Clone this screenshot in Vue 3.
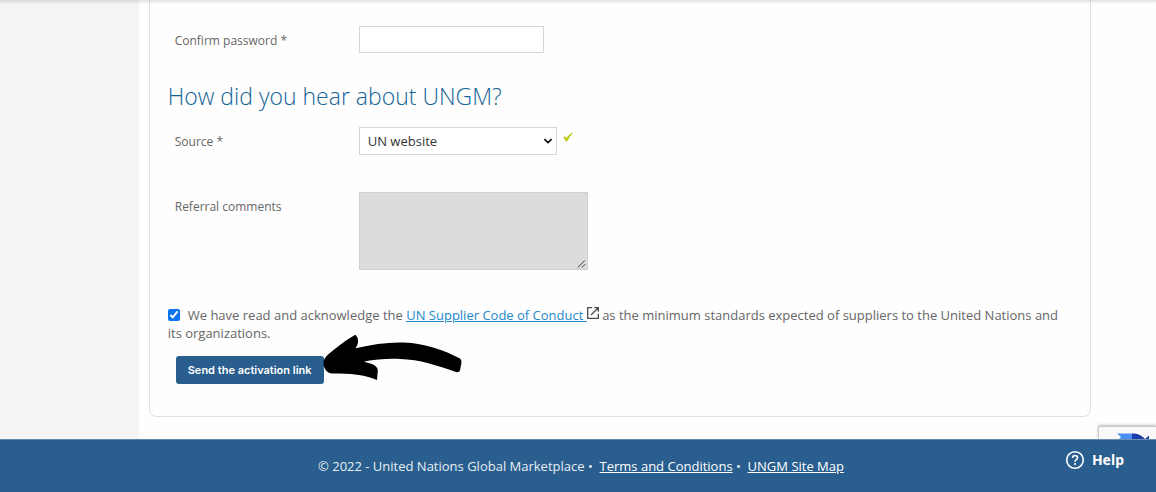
<script setup>
import { ref } from 'vue'

const password = ref('')
const source = ref('UN website')
const comments = ref('')
const accepted = ref(true)
</script>

<template>
  <div class="page">
    <div class="top-shadow"></div>
    <div class="body">
      <aside class="side"></aside>
      <main class="main">
        <form class="card" @submit.prevent>
          <div class="row">
            <label class="label" for="confirm">Confirm password *</label>
            <input id="confirm" v-model="password" class="field text" type="password" />
          </div>
          <h2 class="title">How did you hear about UNGM?</h2>
          <div class="row">
            <label class="label" for="source">Source *</label>
            <div class="select-wrap">
              <select id="source" v-model="source" class="field select">
                <option>UN website</option>
              </select>
              <svg class="chevron" viewBox="0 0 10 6" aria-hidden="true">
                <path d="M1.4 1.1 5 4.6 8.6 1.1" fill="none" stroke="#111" stroke-width="1.7" />
              </svg>
            </div>
            <svg class="tick" viewBox="0 0 10 10" aria-hidden="true">
              <path d="M.4 5.4 2 4.3 3.6 5.8C5.2 3.700 7 2 9.700.3L9.900.9C7.600 3.300 5.900 5.800 4.300 9.200H2.600C2 7.700 1.300 6.500.4 5.400Z" fill="#c0cb18" />
            </svg>
          </div>
          <div class="row comments-row">
            <label class="label" for="comments">Referral comments</label>
            <div class="area-wrap">
              <textarea id="comments" v-model="comments" class="field area"></textarea>
              <svg class="grip" viewBox="0 0 9 8" aria-hidden="true">
                <path d="M.7 7.5 7.8.5M4.9 7.5 8.4 4" fill="none" stroke="#444" stroke-width="1" />
              </svg>
            </div>
          </div>
          <div class="consent">
            <input id="accept" v-model="accepted" class="check" type="checkbox" />
            <label for="accept">We have read and acknowledge the</label>&#32;<a class="link" href="#">UN Supplier Code of Conduct&nbsp;</a>
            <svg class="external" viewBox="0 0 12 12" aria-hidden="true">
              <path d="M5.2.7H.7V11.3H11.3V6.8M7.3.7H11.3V4.7M11.2.8 4 8" fill="none" stroke="#4c4c4c" stroke-width="1.3" />
            </svg>
            as the minimum standards expected of suppliers to the United Nations and its organizations.
          </div>
          <div class="action">
            <button class="send" type="submit">Send the activation link</button>
            <svg class="arrow" viewBox="0 0 140 48" aria-hidden="true">
              <path d="M32.5 1.2Q34 .4 34.5 2C37 6 36.5 10 33.5 14.2C50 10.5 66 8 82 8.5C103 9.4 122 16 138 24.5Q140 26 139.4 29L138 36.5Q137 39 134 38C115 31.500 98 25.500 78 25C65 24.500 54 25.500 42 27.500C47 29.500 52 30 54 32.500Q56 34 55.800 37L55 46C43 40.500 28 39.500 10 39.500C5 39.500 1.500 34 1.500 29C1.500 26 3 23.500 5.500 21C14 14 22 7 32.500 1.200Z" fill="#000" />
            </svg>
          </div>
        </form>
      </main>
    </div>
    <footer class="footer">
      <nav class="legal">
        © 2022 - United Nations Global Marketplace •&nbsp; <a href="#">Terms and Conditions</a> •&nbsp; <a href="#">UNGM Site Map</a>
      </nav>
      <div class="captcha">
        <svg viewBox="0 0 34 8" aria-hidden="true">
          <path d="M0 .5H15V8H0L4 4Z" fill="#4a8df5" />
          <path d="M15 .5C21 .5 25 2.500 28 6L32 2.500V8H15Z" fill="#1c3aa9" />
        </svg>
      </div>
      <button class="help" type="button">
        <svg viewBox="0 0 20 20" aria-hidden="true">
          <circle cx="10" cy="10" r="8.3" fill="none" stroke="#fff" stroke-width="1.6" />
          <path d="M7.500 7.900C7.600 6.300 8.700 5.500 10 5.500S12.500 6.400 12.500 7.800C12.500 9.600 10 9.700 10 11.700" fill="none" stroke="#fff" stroke-width="1.600" />
          <circle cx="10" cy="14" r="1.100" fill="#fff" />
        </svg>
        Help
      </button>
    </footer>
  </div>
</template>

<style>
body {
  background: #fefefe;
}
</style>

<style scoped>
.page {
  position: relative;
  min-height: 100vh;
  display: flex;
  flex-direction: column;
  overflow: hidden;
  font-family: "Open Sans", "Noto Sans", sans-serif;
  font-size: 13px;
  color: #666;
}
.page * {
  box-sizing: border-box;
}
.top-shadow {
  position: absolute;
  inset: 0 0 auto;
  height: 4px;
  background: linear-gradient(rgba(0, 0, 0, 0.12), rgba(0, 0, 0, 0));
}
.body {
  flex: 1;
  display: flex;
}
.side {
  flex: 0 0 12%;
  background: #f4f4f4;
}
.main {
  flex: 1;
  padding: 0 65px 22px 10px;
}
.card {
  padding: 26px 20px 32px 18px;
  border: 1px solid #e0e0e0;
  border-top: 0;
  border-radius: 0 0 8px 8px;
}
.row {
  display: flex;
  align-items: flex-start;
  padding-left: 7px;
}
.label {
  width: 184px;
  padding-top: 6px;
  font-size: 12px;
  line-height: 17px;
}
.field {
  display: block;
  margin: 0;
  border: 1px solid #d6d6d6;
  border-radius: 0;
  background: #fff;
  font-family: inherit;
  color: #333;
}
.text {
  width: 185px;
  height: 27px;
  padding: 0 8px;
}
.title {
  margin: 28px 0 16px;
  font-size: 23px;
  line-height: 30px;
  font-weight: 300;
  color: #146496;
}
.select-wrap,
.area-wrap {
  position: relative;
}
.select {
  width: 198px;
  height: 28px;
  padding: 0 24px 0 8px;
  appearance: none;
  font-size: 13px;
}
.chevron {
  position: absolute;
  right: 4px;
  top: 11px;
  width: 10px;
  height: 6px;
  pointer-events: none;
}
.tick {
  width: 10px;
  height: 10px;
  margin: 5px 0 0 6px;
}
.comments-row {
  margin-top: 37px;
}
.area {
  width: 229px;
  height: 78px;
  background: #dcdcdc;
  border-color: #cfcfcf;
  resize: none;
}
.grip {
  position: absolute;
  right: 2px;
  bottom: 2px;
  width: 9px;
  height: 8px;
  pointer-events: none;
}
.consent {
  margin-top: 36px;
  line-height: 18px;
}
.check {
  width: 12px;
  height: 12px;
  margin: 0 8px 0 0;
  vertical-align: -1px;
  accent-color: #0a74f0;
}
.link {
  color: #2486cb;
}
.external {
  width: 12px;
  height: 12px;
  vertical-align: 1px;
}
.action {
  position: relative;
  margin-top: 14px;
  padding-left: 8px;
}
.send {
  display: block;
  height: 28px;
  padding: 0 12px;
  border: 0;
  border-radius: 3px;
  background: #295e8e;
  color: #fff;
  font-family: Inter, sans-serif;
  font-size: 11px;
  font-weight: 600;
}
.arrow {
  position: absolute;
  left: 154px;
  top: -22px;
  width: 140px;
  height: 48px;
}
.footer {
  position: relative;
  height: 53px;
  background: #295e8e;
  box-shadow: inset 0 1px #5f88ad;
  color: #e8eef4;
  display: flex;
  align-items: center;
  justify-content: center;
}
.legal {
  font-size: 13px;
  padding-left: 6px;
}
.legal a {
  color: #fff;
}
.captcha {
  position: absolute;
  right: 0;
  bottom: 100%;
  width: 58px;
  height: 13px;
  padding: 6px 0 0 18px;
  overflow: hidden;
  border: 1px solid #c9c9c9;
  border-right: 0;
  border-bottom: 0;
  border-radius: 2px 0 0;
  background: #f9f9f9;
  box-shadow: 0 -1px 3px #bbb;
}
.captcha svg {
  display: block;
  width: 34px;
  height: 8px;
}
.help {
  position: absolute;
  right: 32px;
  top: 10px;
  display: flex;
  align-items: center;
  gap: 7px;
  padding: 0;
  border: 0;
  background: none;
  color: #fff;
  font-family: "Noto Sans", sans-serif;
  font-size: 14px;
  line-height: 22px;
  font-weight: 700;
}
.help svg {
  width: 20px;
  height: 20px;
}
</style>
